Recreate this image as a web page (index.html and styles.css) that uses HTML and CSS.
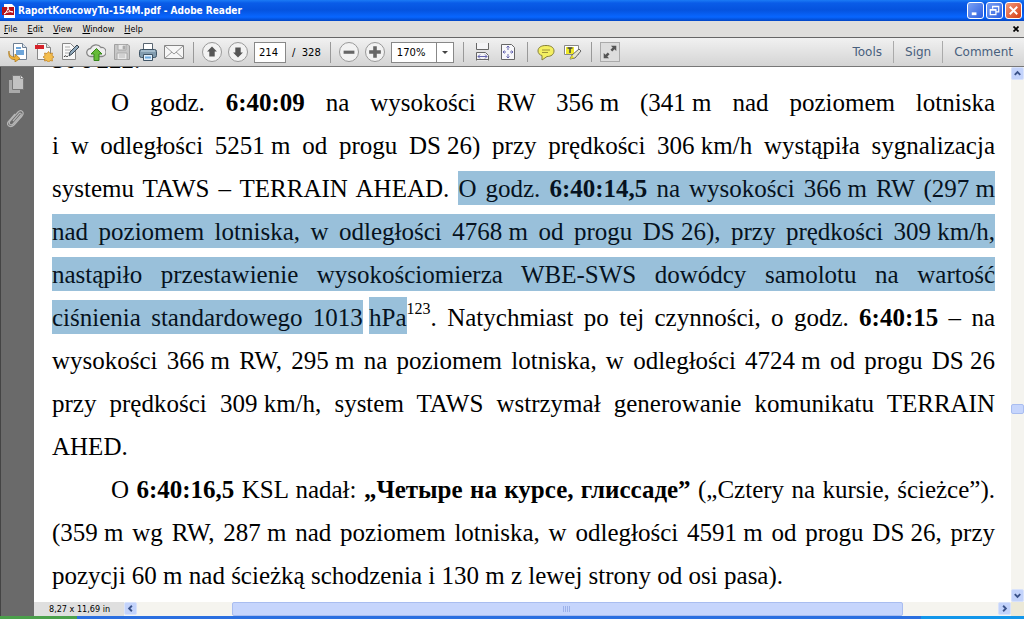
FILE: index.html
```html
<!DOCTYPE html>
<html lang="pl">
<head>
<meta charset="utf-8">
<title>RaportKoncowyTu-154M.pdf - Adobe Reader</title>
<link rel="stylesheet" href="styles.css">
</head>
<body>
<header class="titlebar">
  <svg class="app-icon" viewBox="0 0 14 14" width="14" height="14"><path d="M2 0h8l3 3v11H2z" fill="#fff"/><path d="M0 3h12v8H0z" fill="#b5121b"/><path d="M2 10c3-2 4-5 4-7 0 3 2 5 5 5-3-1-6 0-9 2z" fill="none" stroke="#fff"/></svg>
  <h1 class="title">RaportKoncowyTu-154M.pdf - Adobe Reader</h1>
  <button class="win" aria-label="Minimize"><svg viewBox="0 0 16 16"><path d="M4 11.500h5" stroke="#fff" stroke-width="3"/></svg></button>
  <button class="win" aria-label="Restore"><svg viewBox="0 0 16 16"><path d="M6 6V3.500h6.500v6H10M3.500 7h6v5.500h-6zM6 4h7M3 7.500h7" fill="none" stroke="#fff" stroke-width="1.300"/></svg></button>
  <button class="win win-close" aria-label="Close"><svg viewBox="0 0 16 16"><path d="M4 4l8 8M12 4l-8 8" stroke="#fff" stroke-width="2"/></svg></button>
</header>
<nav class="menubar">
  <button class="menu"><u>F</u>ile</button>
  <button class="menu"><u>E</u>dit</button>
  <button class="menu"><u>V</u>iew</button>
  <button class="menu"><u>W</u>indow</button>
  <button class="menu"><u>H</u>elp</button>
  <button class="menu close-doc" aria-label="Close document"><svg viewBox="0 0 6 6" width="6" height="6"><path d="M.5.5l5 5M5.500.5l-5 5" stroke="#000" stroke-width="1.700"/></svg></button>
</nav>
<div class="toolbar">
  <div class="group">
    <button class="tool" aria-label="Open"><svg viewBox="0 0 20 20"><path d="M5.500 1.500h9l4 4v12h-13z" fill="#fff" stroke="#6f7f92"/><path d="M14.500 1.500v4h4" fill="#d9e4ef" stroke="#6f7f92"/><path d="M8 5h5v2H8zM8 8h8v5H8z" fill="#6da5da"/><path d="M1 9c0 4 2 6 6 6v-3l5 4.500L7 20v-2.500C2 18 0 14 1 9z" fill="#efb33b" stroke="#a87416" stroke-width=".7"/></svg></button>
    <button class="tool" aria-label="Create PDF"><svg viewBox="0 0 20 20"><path d="M3.500 1.500h9l4 4v12h-13z" fill="#f7f7f7" stroke="#888"/><path d="M12.500 1.500v4h4" fill="#ddd" stroke="#888"/><path d="M1 3h9v4H1z" fill="#d5222a"/><path d="M14.500 9.500l1.500 2 2.500-.5-.5 2.500 2 1.500-2 1.500.5 2.500-2.500-.5-1.500 2-1.500-2-2.500.5.5-2.500-2-1.500 2-1.500-.5-2.500 2.500.5z" fill="#f3bd4d" stroke="#bd7c1d" stroke-width=".7"/></svg></button>
    <button class="tool" aria-label="Sign document"><svg viewBox="0 0 20 20"><path d="M2.500 1.500h8l5 5v11h-13z" fill="#f8f8f8" stroke="#888"/><path d="M5 5h5M5 8h6M5 11h4" stroke="#aaa"/><path d="M4 15c2-3 2 1 4-1" fill="none" stroke="#222"/><path d="M9 14l1-4 7-7 2 2-7 7z" fill="#91aabd" stroke="#39454f"/></svg></button>
    <button class="tool" aria-label="Share"><svg viewBox="0 0 20 20"><path d="M5 14.500a4 4 0 0 1-.5-8A6 6 0 0 1 15 5.500a4.500 4.500 0 0 1 1 9z" fill="#eee" stroke="#848484" stroke-width="1.300"/><path d="M10.500 6.500L16 12h-3v6.500H8V12H5z" fill="#65bb38" stroke="#358418"/></svg></button>
    <button class="tool" aria-label="Save" disabled><svg viewBox="0 0 20 20"><path d="M2.500 2.500H16l1.500 1.500v13.500h-15z" fill="#c7c7c7" stroke="#a0a0a0"/><path d="M6 2.500h8V8H6zM5 11h10v6.500H5z" fill="#e9e9e9" stroke="#aaa"/><path d="M11 4h2v3h-2zM7 13h6M7 15h6" fill="#aaa" stroke="#aaa" stroke-width=".7"/></svg></button>
    <button class="tool" aria-label="Print"><svg viewBox="0 0 20 20"><path d="M5.500 1.500h9V8h-9z" fill="#fff" stroke="#596571"/><rect x="1.500" y="7.500" width="17" height="8" rx="2" fill="#829caf" stroke="#405465"/><path d="M3 9h14" stroke="#c7dbe8"/><path d="M5.500 12.500h9v6h-9z" fill="#e4f0fa" stroke="#405465"/><path d="M7 15.500h6" stroke="#6daae0" stroke-width="2"/></svg></button>
    <button class="tool" aria-label="E-mail"><svg viewBox="0 0 20 20"><path d="M.5 3.500h19v13H.5z" fill="#f6f6f6" stroke="#858585"/><path d="M1 4l9 8 9-8M1 16l7-6M19 16l-7-6" fill="none" stroke="#999"/></svg></button>
  </div>
  <div class="group">
    <button class="tool round" aria-label="Previous page"><svg viewBox="0 0 20 20"><path d="M10 4l5.500 5.500H13V15H7V9.500H4.500z" fill="#555"/></svg></button>
    <button class="tool round" aria-label="Next page"><svg viewBox="0 0 20 20"><path d="M10 16l5.500-5.500H13V5H7v5.500H4.500z" fill="#555"/></svg></button>
    <input class="page-no" id="page" value="214" aria-label="Page">
    <label class="page-total" for="page">/&nbsp; 328</label>
  </div>
  <div class="group">
    <button class="tool round" aria-label="Zoom out"><svg viewBox="0 0 20 20"><path d="M4 8.500h12v3.500H4z" fill="#666"/></svg></button>
    <button class="tool round" aria-label="Zoom in"><svg viewBox="0 0 20 20"><path d="M8 3.500h4V8h4.500v4H12v4.500H8V12H3.500V8H8z" fill="#666"/></svg></button>
    <div class="zoom"><select class="zoom-select" aria-label="Zoom"><option>170%</option></select><svg class="zoom-arrow" viewBox="0 0 17 19"><path d="M.5 0v19" stroke="#888"/><path d="M6 8h6l-3 3z" fill="#444"/></svg></div>
  </div>
  <div class="group">
    <button class="tool" aria-label="Fit width"><svg viewBox="0 0 20 20"><path d="M4.500 1v6.500h12V1M4.500 18.500v-8h9l3 3v5" fill="#f4f4f6" stroke="#666"/><path d="M4 17.500h13" stroke="#666"/><path d="M6 14.500h9M8 12.500l-2 2 2 2M13 12.500l2 2-2 2" fill="none" stroke="#6666b0"/></svg></button>
    <button class="tool" aria-label="Fit page"><svg viewBox="0 0 20 20"><path d="M3.500 2.500h10l3 3v12h-13z" fill="#f7f7fa" stroke="#666"/><path d="M10 4v4M10 12v4M5 10h3M12 10h3M8.500 5.500L10 4l1.500 1.500M8.500 14.500L10 16l1.500-1.500M6.500 8.500L5 10l1.500 1.500M13.500 8.500L15 10l-1.500 1.500" fill="none" stroke="#6666b0"/></svg></button>
  </div>
  <div class="group">
    <button class="tool" aria-label="Sticky note"><svg viewBox="0 0 20 20"><path d="M10 3.500c5 0 8 2 8 5.500s-3 5.500-7 5.500L6 18v-4.500C3.500 13 2 11 2 9c0-3.500 3-5.500 8-5.500z" fill="#f4ef61" stroke="#85803b"/><path d="M6 8h8M6 10.500h6" stroke="#9e9439"/></svg></button>
    <button class="tool" aria-label="Highlight text"><svg viewBox="0 0 20 20"><path d="M2.500 3.500h14v9h-14z" fill="#fff" stroke="#888"/><path d="M4 5h8v7H4z" fill="#eee829"/><path d="M5.500 6h5M8 6v5" stroke="#444" stroke-width="1.500"/><path d="M8 17l2-4 7-6 2 2-6 7z" fill="#e6e6cf" stroke="#666"/><path d="M8 17l2-4 2 3z" fill="#e2db26"/></svg></button>
  </div>
  <div class="group">
    <button class="tool boxed" aria-label="Read mode"><svg viewBox="0 0 20 20"><path d="M11 3h6v6l-2-2-2.500 2.500-2-2L13 5zM9 17H3v-6l2 2 2.500-2.500 2 2L7 15z" fill="#555"/></svg></button>
  </div>
  <div class="panes">
    <button class="pane">Tools</button>
    <button class="pane">Sign</button>
    <button class="pane">Comment</button>
  </div>
</div>
<div class="workspace">
  <aside class="sidebar">
    <button class="side" aria-label="Page thumbnails"><svg viewBox="0 0 20 20" width="20" height="20"><path d="M2 6h11v13H2z" fill="#aaa"/><path d="M5.500 1.500h8l3 3v11h-11z" fill="#c2c2c2" stroke="#777"/><path d="M13.500 1.500v3h3" fill="#eee" stroke="#888"/></svg></button>
    <button class="side" aria-label="Attachments"><svg viewBox="0 0 20 20" width="20" height="20"><path d="M6 13l6-7c1-2 3 0 2 1l-8 9c-2 2-5 0-3-3l8-9c3-3 7 0 4 4l-8 9c-3 3-8 1-6-3l7-8" fill="none" stroke="#b5b5b5" stroke-width="1.200"/></svg></button>
  </aside>
  <section class="viewer">
    <div class="scroll-row">
      <main class="document">
        <p class="para"><span class="line last">50 i 222.</span></p>
        <p class="para">
          <span class="line indent">O godz. <b>6:40:09</b> na wysokości RW <span class="qty">356 m</span> <span class="qty">(341 m</span> nad poziomem lotniska</span>
          <span class="line">i w odległości <span class="qty">5251 m</span> od progu <span class="qty">DS 26)</span> przy prędkości <span class="qty">306 km/h</span> wystąpiła sygnalizacja</span>
          <span class="line">systemu TAWS – TERRAIN AHEAD. <mark>O godz. <b>6:40:14,5</b> na wysokości <span class="qty">366 m</span> RW <span class="qty">(297 m</span></mark></span>
          <span class="line"><mark>nad poziomem lotniska, w odległości <span class="qty">4768 m</span> od progu <span class="qty">DS 26),</span> przy prędkości <span class="qty">309 km/h,</span></mark></span>
          <span class="line"><mark>nastąpiło przestawienie wysokościomierza WBE-SWS dowódcy samolotu na wartość</mark></span>
          <span class="line"><mark>ciśnienia standardowego 1013</mark><span class="qty">&nbsp;<mark class="tall">hPa</mark></span><sup>123</sup>. Natychmiast po tej czynności, o godz. <b>6:40:15</b> – na</span>
          <span class="line">wysokości <span class="qty">366 m</span> RW, <span class="qty">295 m</span> na poziomem lotniska, w odległości <span class="qty">4724 m</span> od progu <span class="qty">DS 26</span></span>
          <span class="line">przy prędkości <span class="qty">309 km/h,</span> system TAWS wstrzymał generowanie komunikatu TERRAIN</span>
          <span class="line last">AHED.</span>
        </p>
        <p class="para">
          <span class="line indent">O <b>6:40:16,5</b> KSL nadał: <b>„Четыре на курсе, глиссаде”</b> („Cztery na kursie, ścieżce”).</span>
          <span class="line"><span class="qty">(359 m</span> wg RW, <span class="qty">287 m</span> nad poziomem lotniska, w odległości <span class="qty">4591 m</span> od progu <span class="qty">DS 26,</span> przy</span>
          <span class="line last">pozycji 60 m nad ścieżką schodzenia i 130 m z lewej strony od osi pasa).</span>
        </p>
      </main>
      <div class="vbar">
        <button class="arrow" aria-label="Scroll up"><svg viewBox="0 0 12 12"><path d="M3 7.500l3-3 3 3" fill="none" stroke="#3a5289" stroke-width="2"/></svg></button>
        <div class="vtrack"><div class="vthumb"></div></div>
        <button class="arrow" aria-label="Scroll down"><svg viewBox="0 0 12 12"><path d="M3 4.500l3 3 3-3" fill="none" stroke="#3a5289" stroke-width="2"/></svg></button>
      </div>
    </div>
    <div class="hbar">
      <div class="page-size">8,27 x 11,69 in</div>
      <button class="arrow" aria-label="Scroll left"><svg viewBox="0 0 12 12"><path d="M7.500 3l-3 3 3 3" fill="none" stroke="#3a5289" stroke-width="2"/></svg></button>
      <div class="htrack"><div class="hthumb"><svg viewBox="0 0 8 6" width="8" height="6"><path d="M.5 0v6M2.500 0v6M4.500 0v6M6.500 0v6" stroke="#9db2ea"/></svg></div></div>
      <button class="arrow" aria-label="Scroll right"><svg viewBox="0 0 12 12"><path d="M4.500 3l3 3-3 3" fill="none" stroke="#3a5289" stroke-width="2"/></svg></button>
      <div class="corner"></div>
    </div>
  </section>
</div>
<footer class="taskbar"><div class="start"></div><div class="tasks"></div><div class="tray"></div></footer>
</body>
</html>
```
FILE: styles.css
```css
* { box-sizing: border-box; }
body {
  margin: 0;
  height: 100vh;
  display: flex;
  flex-direction: column;
  overflow: hidden;
  background: #fff;
  font-family: "DejaVu Sans Condensed", "DejaVu Sans", sans-serif;
  font-size: 9px;
  color: #000;
}
button {
  border: 0;
  padding: 0;
  margin: 0;
  background: none;
  font: inherit;
  color: inherit;
}
svg { display: block; }

.titlebar {
  flex: none;
  height: 21px;
  display: flex;
  align-items: center;
  gap: 2px;
  padding: 0 2px;
  background: linear-gradient(#1b7bf5 0, #0a5ce8 3px, #0553de 10px, #0866ff 17px, #0245c4 21px);
}
.title {
  flex: 1;
  margin: 0;
  font-size: 10px;
  font-weight: bold;
  color: #fff;
}
.win {
  width: 17px;
  height: 17px;
  border: 1px solid #fff;
  border-radius: 3px;
  background: linear-gradient(135deg, #7ba2f4, #2a5de0);
}
.win-close { background: linear-gradient(135deg, #f09a7c, #d63c12); }

.menubar {
  flex: none;
  height: 16px;
  display: flex;
  align-items: center;
  gap: 10px;
  padding: 0 5px 0 4px;
  background: #dfdedc;
}
.close-doc { margin-left: auto; }

.toolbar {
  flex: none;
  height: 30px;
  display: flex;
  align-items: center;
  padding-left: 8px;
  border-top: 1px solid #666;
  border-bottom: 1px solid #777;
  background: linear-gradient(#f1f1f1, #d4d4d4);
}
.group {
  display: flex;
  align-items: center;
  gap: 6px;
}
.group + .group {
  margin-left: 9px;
  padding-left: 8px;
  border-left: 1px solid #999;
}
.tool { width: 20px; height: 20px; }
.round {
  border: 1px solid #999;
  border-radius: 50%;
  background: #f2f2f2;
}
.boxed { border: 1px solid #aaa; background: #ddd; }
.page-no {
  width: 32px;
  height: 21px;
  padding: 0 4px;
  border: 1px solid #888;
  background: #fff;
  font: 10px "DejaVu Sans", sans-serif;
}
.page-total { font: 10px "DejaVu Sans", sans-serif; }
.zoom { display: grid; width: 63px; height: 21px; }
.zoom-select {
  grid-area: 1 / 1;
  appearance: none;
  padding: 0 5px;
  border: 1px solid #888;
  border-radius: 0;
  background: #fff;
  font: 10px "DejaVu Sans", sans-serif;
  color: #000;
}
.zoom-arrow {
  grid-area: 1 / 1;
  place-self: center end;
  width: 18px;
  height: 19px;
  padding-right: 1px;
  pointer-events: none;
}
.panes { margin-left: auto; display: flex; }
.pane {
  height: 22px;
  padding: 0 11px;
  font: 12px "DejaVu Sans", sans-serif;
  color: #48607d;
}
.pane + .pane { border-left: 1px solid #aaa; }

.workspace { flex: 1; min-height: 0; display: flex; }
.sidebar {
  flex: none;
  width: 34px;
  padding: 7px 6px;
  display: flex;
  flex-direction: column;
  gap: 14px;
  background: #6a6a6a;
  border-left: 1px solid #444;
}
.side { width: 20px; height: 20px; }
.viewer { flex: 1; min-width: 0; display: flex; flex-direction: column; }
.scroll-row { flex: 1; min-height: 0; display: flex; }
.document {
  flex: 1;
  min-width: 0;
  overflow: hidden;
  padding: 0 16px 0 18px;
  font-family: "Liberation Serif", serif;
  font-size: 25px;
  line-height: 43px;
}
.para { margin: 0; }
.para:first-child { margin-top: -29px; }
.line {
  display: block;
  text-align: justify;
  text-align-last: justify;
  white-space: nowrap;
}
.indent { padding-left: 59px; }
.last { text-align-last: left; }
.qty { display: inline-block; }
mark {
  padding: 4px 0 3px;
  background: #99c0da;
  color: #061220;
}
.tall { padding-top: 7px; }
sup { font-size: 16px; line-height: 0; vertical-align: 12px; }

.vbar {
  flex: none;
  width: 13px;
  display: flex;
  flex-direction: column;
  background: #f5f4ef;
}
.arrow {
  flex: none;
  width: 13px;
  height: 13px;
  border: 1px solid #d8e2fb;
  border-radius: 2px;
  background: #c3d3fb;
}
.vtrack { flex: 1; display: flex; flex-direction: column; }
.vtrack::before { content: ""; flex: 65; }
.vtrack::after { content: ""; flex: 35; }
.vthumb {
  height: 10px;
  border: 1px solid #a9bdf0;
  border-radius: 2px;
  background: #c6d5fc;
}
.hbar {
  flex: none;
  height: 14px;
  display: flex;
  background: #f5f4ef;
}
.page-size {
  width: 90px;
  padding-left: 15px;
  line-height: 14px;
  background: #dfdfdf;
}
.htrack { flex: 1; display: flex; justify-content: center; }
.hthumb {
  width: 78%;
  display: flex;
  align-items: center;
  justify-content: center;
  border: 1px solid #a9bdf0;
  border-radius: 2px;
  background: #c6d5fc;
}
.corner { width: 13px; background: #ece9d8; }

.taskbar { flex: none; height: 3px; display: flex; }
.start { width: 77px; background: #4ba04b; }
.tasks { flex: 1; background: #2b6fe0; }
.tray { width: 103px; background: #1296ea; }
```
